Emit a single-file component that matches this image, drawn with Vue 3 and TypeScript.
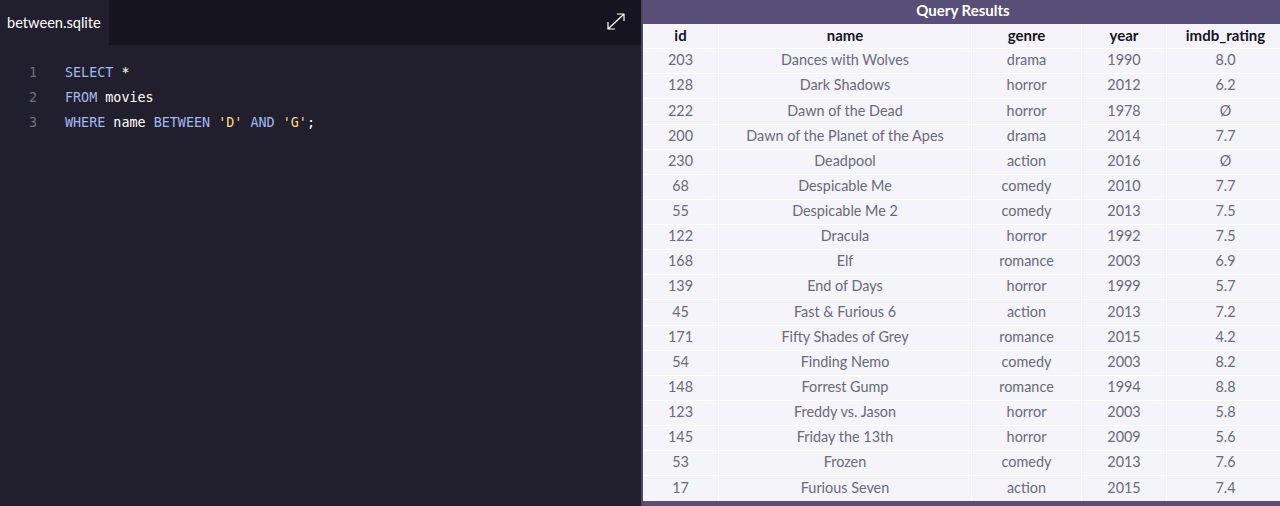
<script setup lang="ts">
interface Movie {
  id: number
  name: string
  genre: string
  year: number
  rating: string
}

const columns = ['id', 'name', 'genre', 'year', 'imdb_rating']

const movies: Movie[] = [
  { id: 203, name: 'Dances with Wolves', genre: 'drama', year: 1990, rating: '8.0' },
  { id: 128, name: 'Dark Shadows', genre: 'horror', year: 2012, rating: '6.2' },
  { id: 222, name: 'Dawn of the Dead', genre: 'horror', year: 1978, rating: 'Ø' },
  { id: 200, name: 'Dawn of the Planet of the Apes', genre: 'drama', year: 2014, rating: '7.7' },
  { id: 230, name: 'Deadpool', genre: 'action', year: 2016, rating: 'Ø' },
  { id: 68, name: 'Despicable Me', genre: 'comedy', year: 2010, rating: '7.7' },
  { id: 55, name: 'Despicable Me 2', genre: 'comedy', year: 2013, rating: '7.5' },
  { id: 122, name: 'Dracula', genre: 'horror', year: 1992, rating: '7.5' },
  { id: 168, name: 'Elf', genre: 'romance', year: 2003, rating: '6.9' },
  { id: 139, name: 'End of Days', genre: 'horror', year: 1999, rating: '5.7' },
  { id: 45, name: 'Fast & Furious 6', genre: 'action', year: 2013, rating: '7.2' },
  { id: 171, name: 'Fifty Shades of Grey', genre: 'romance', year: 2015, rating: '4.2' },
  { id: 54, name: 'Finding Nemo', genre: 'comedy', year: 2003, rating: '8.2' },
  { id: 148, name: 'Forrest Gump', genre: 'romance', year: 1994, rating: '8.8' },
  { id: 123, name: 'Freddy vs. Jason', genre: 'horror', year: 2003, rating: '5.8' },
  { id: 145, name: 'Friday the 13th', genre: 'horror', year: 2009, rating: '5.6' },
  { id: 53, name: 'Frozen', genre: 'comedy', year: 2013, rating: '7.6' },
  { id: 17, name: 'Furious Seven', genre: 'action', year: 2015, rating: '7.4' },
]
</script>

<template>
  <div class="workspace">
    <section class="editor">
      <header class="tabs">
        <div class="tab">between.sqlite</div>
        <svg class="expand" width="18" height="17" viewBox="0 0 18 17" fill="none" stroke="#fff" stroke-width="1.2">
          <path d="M1 16 17 1M10 1H17V8M1 9V16H8" />
        </svg>
      </header>
      <div class="code">
        <div class="line"><span class="num">1</span><span><span class="kw">SELECT</span> *</span></div>
        <div class="line"><span class="num">2</span><span><span class="kw">FROM</span> movies</span></div>
        <div class="line"><span class="num">3</span><span><span class="kw">WHERE</span> name <span class="kw">BETWEEN</span> <span class="str">'D'</span> <span class="kw">AND</span> <span class="str">'G'</span>;</span></div>
      </div>
    </section>
    <section class="results">
      <h2>Query Results</h2>
      <table>
        <colgroup>
          <col class="c-id" />
          <col class="c-name" />
          <col class="c-genre" />
          <col class="c-year" />
          <col />
        </colgroup>
        <thead>
          <tr>
            <th v-for="col in columns" :key="col">{{ col }}</th>
          </tr>
        </thead>
        <tbody>
          <tr v-for="m in movies" :key="m.id">
            <td>{{ m.id }}</td>
            <td>{{ m.name }}</td>
            <td>{{ m.genre }}</td>
            <td>{{ m.year }}</td>
            <td>{{ m.rating }}</td>
          </tr>
        </tbody>
      </table>
    </section>
  </div>
</template>

<style>
html, body { margin: 0; background: #211f2e; }
</style>

<style scoped>
.workspace { display: flex; width: 1280px; height: 506px; overflow: hidden; }
.editor { width: 641px; background: #211f2e; color: #fff; }
.tabs { display: flex; justify-content: space-between; align-items: center; height: 45px; background: #15141f; padding-right: 16px; box-sizing: border-box; width: 100%; }
.tab { display: flex; align-items: center; height: 100%; padding: 0 8px 0 7px; background: #211f2e; font: 14.6px Lato, sans-serif; color: #fff; }
.expand { display: block; margin-top: -3px; }
.code { padding-top: 15px; font: 13.4px/25px "DejaVu Sans Mono", monospace; }
.line { display: flex; }
.num { width: 65px; padding-left: 29px; box-sizing: border-box; color: #70707a; }
.kw { color: #a3b8ef; }
.str { color: #fbdc85; }
.results { flex: 1; border-left: 2px solid #4a4a5a; background: #574f78; box-sizing: border-box; }
h2 { margin: 0; height: 24px; padding-left: 3px; box-sizing: border-box; font: 700 15px/20px Lato, sans-serif; color: #fff; text-align: center; }
table { width: 100%; border-collapse: separate; border-spacing: 0; table-layout: fixed; background: #f5f4fa; font: 14.4px/18px Lato, sans-serif; text-align: center; }
th, td { box-sizing: border-box; height: 25.14px; padding: 0 0 1.7px; border-right: 1px solid #fff; border-bottom: 1px solid #fff; }
th { color: #15141f; font-size: 15px; font-weight: 700; }
td { color: #6a6a78; }
th:last-child, td:last-child { border-right: 0; padding-left: 4px; }
tbody tr:last-child td { border-bottom: 0; }
.c-id { width: 76px; }
.c-name { width: 253px; }
.c-genre { width: 110px; }
.c-year { width: 85px; }
</style>
